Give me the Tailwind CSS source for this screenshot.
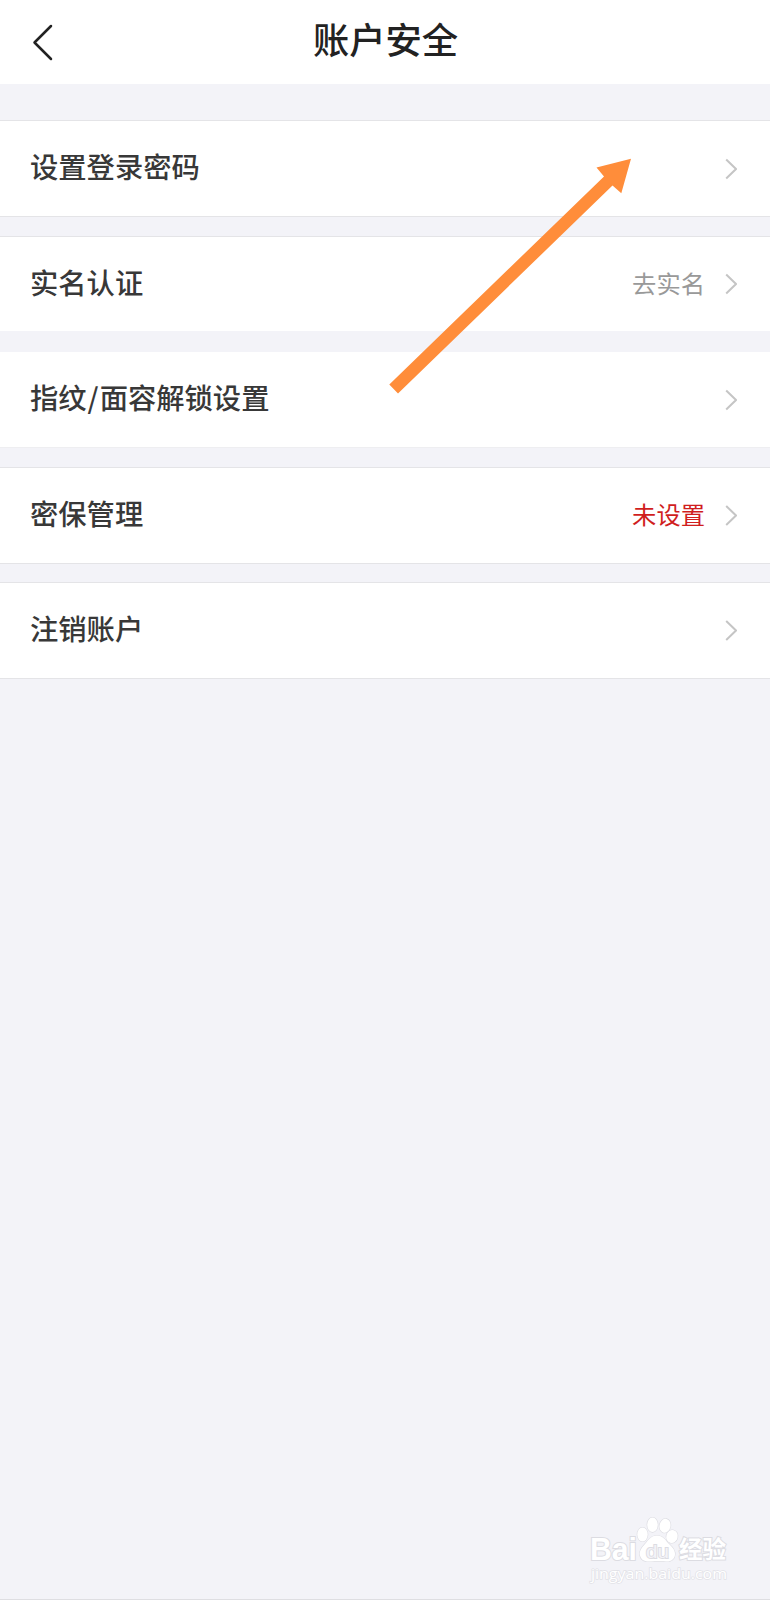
<!DOCTYPE html>
<html lang="zh-CN">
<head>
<meta charset="utf-8">
<title>账户安全</title>
<script src="https://cdn.jsdelivr.net/npm/@tailwindcss/browser@4"></script>
</head>
<body class="relative h-[1600px] w-[770px] overflow-hidden bg-[#f3f3f8] font-['Noto_Sans_CJK_SC',sans-serif] text-[28.3px] leading-none text-[#383838]">
<div class="flex h-full flex-col border-b border-[#dedee2]">
<header class="grid h-[84px] shrink-0 grid-cols-[1fr_auto_1fr] items-center bg-white px-[30px]">
  <svg class="h-[42px] w-6" viewBox="0 0 24 42" fill="none" stroke="#222" stroke-width="2.5" stroke-linecap="round" stroke-linejoin="round"><path d="M21 5 4.500 21.500 21 38"/></svg>
  <h1 class="pb-[7px] pl-px text-[36.3px] font-medium text-[#222222]">账户安全</h1>
</header>
<main class="flex flex-col pt-9">
  <a class="mb-[19px] flex h-[97px] items-center border-y border-[#e4e4e7] bg-white pr-[33px] pl-[30px]">
    <span class="flex-1 pb-1 font-medium">设置登录密码</span>
    <svg class="h-6 w-3" viewBox="0 0 12 24" fill="none" stroke="#c5c5c5" stroke-width="2"><path d="M1.200 2.500 11 12 1.200 21.500"/></svg>
  </a>
  <a class="mb-[21px] flex h-[95px] items-center border-t border-[#e4e4e7] bg-white pr-[33px] pl-[30px]">
    <span class="flex-1 pb-1 font-medium">实名认证</span>
    <span class="mr-5 pb-0.5 text-[24.3px] text-[#999999]">去实名</span>
    <svg class="h-6 w-3" viewBox="0 0 12 24" fill="none" stroke="#c5c5c5" stroke-width="2"><path d="M1.200 2.500 11 12 1.200 21.500"/></svg>
  </a>
  <a class="mb-[19px] flex h-[96px] items-center border-b border-[#eeeef1] bg-white pr-[33px] pl-[30px]">
    <span class="flex-1 pb-1 font-medium">指纹<span class="px-px">/</span>面容解锁设置</span>
    <svg class="h-6 w-3" viewBox="0 0 12 24" fill="none" stroke="#c5c5c5" stroke-width="2"><path d="M1.200 2.500 11 12 1.200 21.500"/></svg>
  </a>
  <a class="mb-[18px] flex h-[97px] items-center border-y border-[#e4e4e7] bg-white pr-[33px] pl-[30px]">
    <span class="flex-1 pb-1 font-medium">密保管理</span>
    <span class="mr-5 pb-[3px] text-[24.3px] text-[#d01e1e]">未设置</span>
    <svg class="h-6 w-3" viewBox="0 0 12 24" fill="none" stroke="#c5c5c5" stroke-width="2"><path d="M1.200 2 11 11.500 1.200 21"/></svg>
  </a>
  <a class="flex h-[97px] items-center border-y border-[#e4e4e7] bg-white pr-[33px] pl-[30px]">
    <span class="flex-1 pb-1 font-medium">注销账户</span>
    <svg class="h-6 w-3" viewBox="0 0 12 24" fill="none" stroke="#c5c5c5" stroke-width="2"><path d="M1.200 2 11 11.500 1.200 21"/></svg>
  </a>
</main>
</div>

<!-- Pointer arrow lying over the rows -->
<svg class="absolute top-[140px] left-[370px] h-[270px] w-[280px]" viewBox="0 0 280 270"><path fill="#ff8d3a" d="M261 18.700 251.300 53.300 242.500 45.500 28 253.500 19.300 244.500 234 36.500 226.500 27.500Z"/></svg>

<!-- Watermark -->
<svg class="absolute top-[1510px] left-[580px] h-[80px] w-[160px]" viewBox="0 0 160 80" fill="#fff" stroke="#dcdce2" stroke-width="2" paint-order="stroke">
  <text x="10" y="50" font-family="Liberation Sans" font-weight="700" font-size="31" textLength="47" lengthAdjust="spacingAndGlyphs">Bai</text>
  <g stroke-width="1.200">
    <ellipse cx="62.500" cy="24.500" rx="5.200" ry="7"/>
    <ellipse cx="72.500" cy="14.800" rx="5.300" ry="7.300"/>
    <ellipse cx="85" cy="15.800" rx="5.500" ry="7" transform="rotate(12 85 15.800)"/>
    <ellipse cx="92" cy="26.500" rx="5.700" ry="6.500" transform="rotate(15 92 26.500)"/>
    <path d="M77 25.500c-6 0-9 5-12 8.500-3.500 4-6 7-5 11.500 1 4.500 5 6 9 6 5 0 12-.5 17 0 5 .3 9-2.500 9-7.500 0-5-3.500-7.500-7-11-3-3.500-5.500-7.500-11-7.500Z"/>
  </g>
  <text x="66" y="47.500" font-family="Liberation Sans" font-size="19" textLength="23" lengthAdjust="spacingAndGlyphs" stroke-width="1.800" fill="#f3f3f8">du</text>
  <text x="99" y="48" font-family="Noto Sans CJK SC" font-weight="700" font-size="23.500" textLength="47" lengthAdjust="spacingAndGlyphs">经验</text>
  <text x="11" y="68.500" font-family="Open Sans" font-size="14.500" textLength="136" lengthAdjust="spacingAndGlyphs" stroke-width="1.400" stroke="#e2e2e7">jingyan.baidu.com</text>
</svg>
</body>
</html>
